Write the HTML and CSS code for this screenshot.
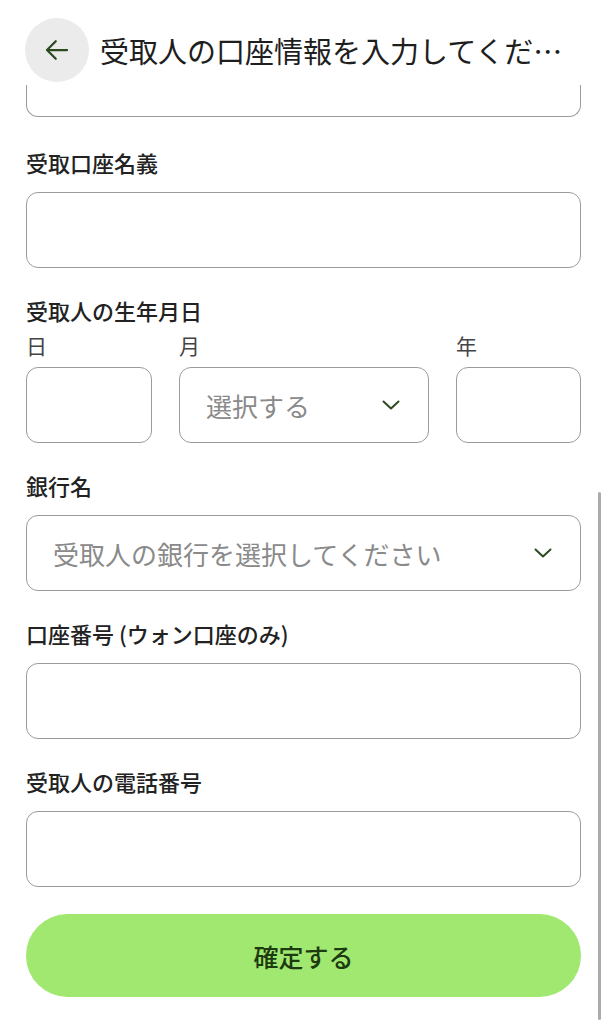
FILE: index.html
```html
<!DOCTYPE html>
<html lang="ja">
<head>
<meta charset="utf-8">
<title>受取人の口座情報を入力してください</title>
<link rel="stylesheet" href="styles.css">
</head>
<body>
<div class="screen">
  <header class="topbar">
    <div class="topbar-row">
      <button class="back" aria-label="戻る">
        <svg width="30" height="30" viewBox="0 0 24 24" fill="none" stroke="#2b4a1e" stroke-width="1.8" stroke-linecap="round" stroke-linejoin="round"><path d="M20 12H4.5"/><path d="M11 5l-7 7 7 7"/></svg>
      </button>
      <h1 class="title">受取人の口座情報を入力してください</h1>
    </div>
  </header>
  <main class="form">
    <div class="box box-cut"></div>

    <div class="group">
      <div class="label">受取口座名義</div>
      <div class="box"></div>
    </div>

    <div class="group">
      <div class="label label-tight">受取人の生年月日</div>
      <div class="dob">
        <div class="dob-col dob-day">
          <div class="sublabel">日</div>
          <div class="box"></div>
        </div>
        <div class="dob-col dob-month">
          <div class="sublabel">月</div>
          <div class="box select"><span class="placeholder">選択する</span><svg class="chev" width="18" height="10" viewBox="0 0 18 10" fill="none" stroke="#2d4a1e" stroke-width="2" stroke-linecap="round" stroke-linejoin="round"><path d="M1.5 1.5L9 8.5L16.5 1.5"/></svg></div>
        </div>
        <div class="dob-col dob-year">
          <div class="sublabel">年</div>
          <div class="box"></div>
        </div>
      </div>
    </div>

    <div class="group">
      <div class="label">銀行名</div>
      <div class="box select"><span class="placeholder">受取人の銀行を選択してください</span><svg class="chev" width="18" height="10" viewBox="0 0 18 10" fill="none" stroke="#2d4a1e" stroke-width="2" stroke-linecap="round" stroke-linejoin="round"><path d="M1.5 1.5L9 8.5L16.5 1.5"/></svg></div>
    </div>

    <div class="group">
      <div class="label">口座番号 (ウォン口座のみ)</div>
      <div class="box"></div>
    </div>

    <div class="group group-last">
      <div class="label">受取人の電話番号</div>
      <div class="box"></div>
    </div>

    <button class="submit">確定する</button>
  </main>
  <div class="scrollbar"></div>
</div>
</body>
</html>
```
FILE: styles.css
```css
* { box-sizing: border-box; }
html, body { margin: 0; padding: 0; background: #fff; }
body {
  font-family: "Noto Sans CJK JP", "Noto Sans", sans-serif;
  color: #222;
}
.screen {
  position: relative;
  width: 608px;
  height: 1024px;
  overflow: hidden;
}
.topbar {
  height: 85px;
  padding: 18px 0 0 25px;
  background: #fff;
}
.topbar-row {
  height: 64px;
  display: flex;
  align-items: center;
  gap: 11px;
}
.back {
  width: 64px;
  height: 64px;
  border-radius: 50%;
  border: none;
  background: #ebebeb;
  display: flex;
  align-items: center;
  justify-content: center;
  padding: 0;
  flex: none;
}
.title {
  margin: 0;
  font-size: 29px;
  font-weight: 400;
  line-height: 40px;
  white-space: nowrap;
  overflow: hidden;
  text-overflow: ellipsis;
  width: 470px;
  color: #1e1e1e;
}
.form {
  padding: 0 27px 0 26px;
}
.box {
  height: 76px;
  border: 1.5px solid #9b9b9b;
  border-radius: 12px;
  background: #fff;
}
.box-cut {
  height: 32px;
  border-top: none;
  border-radius: 0 0 12px 12px;
  margin-bottom: 34px;
}
.group {
  margin-bottom: 31px;
}
.group-last {
  margin-bottom: 27px;
}
.label {
  font-size: 22px;
  line-height: 22px;
  font-weight: 500;
  color: #222;
  margin-bottom: 19px;
}
.label-tight {
  margin-bottom: 13px;
}
.dob {
  display: flex;
  gap: 27px;
}
.dob-day { width: 126px; }
.dob-month { width: 250px; }
.dob-year { flex: 1; }
.sublabel {
  font-size: 21px;
  line-height: 22px;
  font-weight: 400;
  color: #444;
  margin-bottom: 11px;
}
.select {
  display: flex;
  align-items: center;
  justify-content: space-between;
  padding: 0 28px 0 26px;
}
.placeholder {
  font-size: 26px;
  color: #8a8a8a;
  white-space: nowrap;
}
.chev { flex: none; }
.submit {
  display: block;
  width: 100%;
  height: 83px;
  border: none;
  border-radius: 42px;
  background: #a0e870;
  color: #1d3a10;
  font-family: "Noto Sans CJK JP", "Noto Sans", sans-serif;
  font-size: 25px;
  font-weight: 500;
}
.scrollbar {
  position: absolute;
  left: 598px;
  top: 492px;
  width: 3px;
  height: 528px;
  border-radius: 2px;
  background: #ababab;
}
```
